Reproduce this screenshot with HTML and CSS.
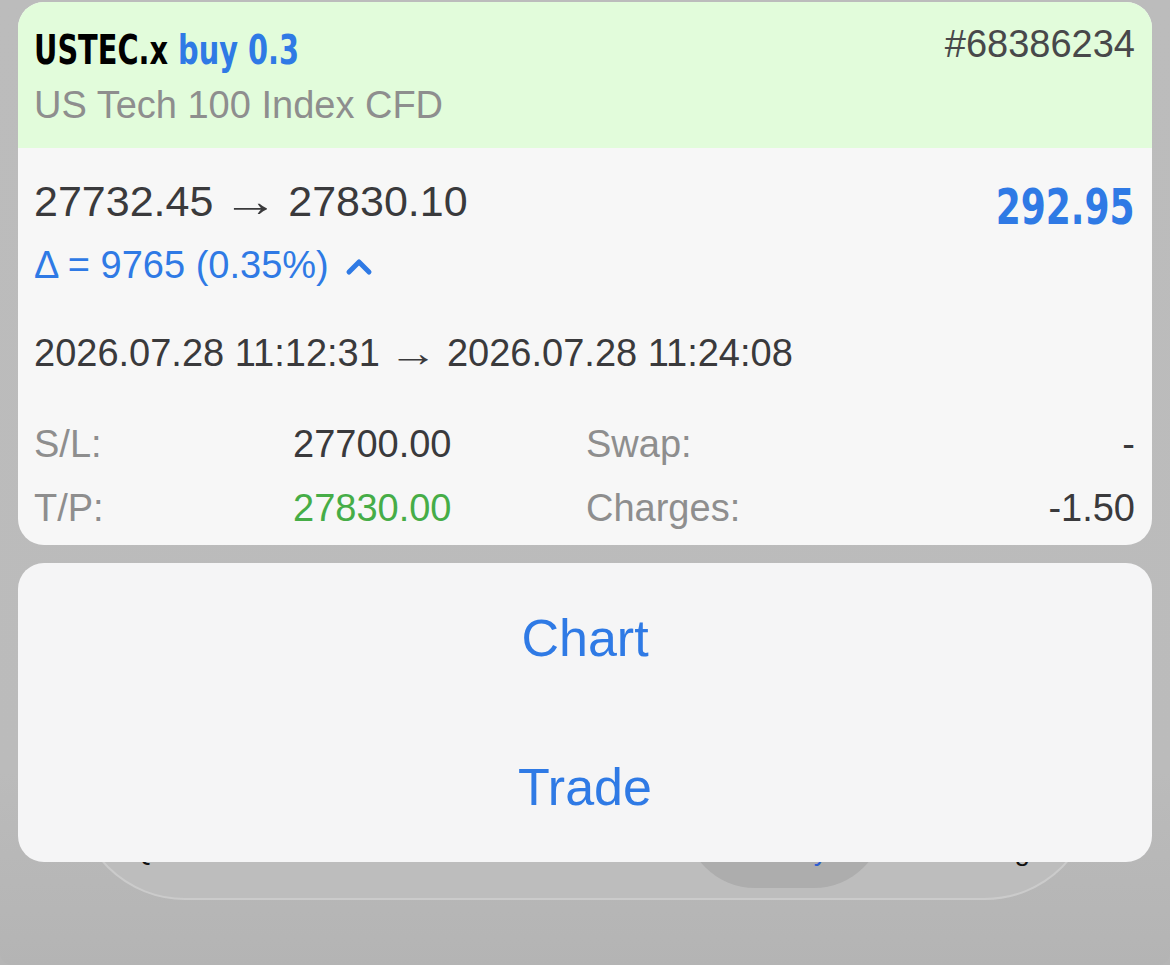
FILE: index.html
```html
<!DOCTYPE html>
<html lang="en">
  <head>
    <meta charset="UTF-8">
    <meta name="viewport" content="width=device-width, initial-scale=1.0">
    <title>USTEC.x position</title>
    <link rel="stylesheet" href="styles.css">
  </head>
  <body>
    <div class="screen">
      <!-- tab bar sitting under the action sheet -->
      <nav class="tabbar" aria-hidden="true">
        <span class="tab">Quotes</span>
        <span class="tab">Chart</span>
        <span class="tab">Trade</span>
        <span class="tab active">History</span>
        <span class="tab">Settings</span>
      </nav>

      <div class="deal">
        <div class="deal-head">
          <div class="head-row">
            <div class="symbol">USTEC.x <span class="side">buy 0.3</span></div>
            <div class="ticket">#68386234</div>
          </div>
          <div class="desc">US Tech 100 Index CFD</div>
        </div>

        <div class="deal-body">
          <div class="price-row">
            <div class="prices">27732.45 <span class="arrow">→</span> 27830.10</div>
            <div class="profit">292.95</div>
          </div>
          <div class="delta">
            Δ = 9765 (0.35%)
            <svg class="chev" width="28" height="18" viewBox="0 0 28 18">
              <path d="M4 14 L14 4 L24 14" fill="none" stroke="#2f7ae5" stroke-width="5" stroke-linecap="round" stroke-linejoin="round"/>
            </svg>
          </div>
          <div class="times">2026.07.28 11:12:31 <span class="arrow">→</span> 2026.07.28 11:24:08</div>

          <div class="stats">
            <span class="lbl">S/L:</span>
            <span class="val">27700.00</span>
            <span class="lbl">Swap:</span>
            <span class="val right">-</span>
            <span class="lbl">T/P:</span>
            <span class="val green">27830.00</span>
            <span class="lbl">Charges:</span>
            <span class="val right">-1.50</span>
          </div>
        </div>
      </div>

      <div class="sheet">
        <button class="sheet-btn">Chart</button>
        <button class="sheet-btn">Trade</button>
      </div>
    </div>
  </body>
</html>
```
FILE: styles.css
```css
body {
  margin: 0;
  padding: 0;
  font-family: 'Liberation Sans', Arial, sans-serif;
  background: #b6b6b6;
}

.screen {
  position: relative;
  height: 965px;
  box-sizing: border-box;
  padding: 2px 18px 0;
  display: flex;
  flex-direction: column;
  gap: 18px;
  overflow: hidden;
  background: linear-gradient(to bottom, #bcbcbc 0%, #bbbbbb 80%, #b4b4b4 100%);
  border-radius: 0 0 12px 12px;
}

/* tab bar behind sheet */
.tabbar {
  position: absolute;
  left: 75px;
  width: 1020px;
  top: 690px;
  height: 210px;
  box-sizing: border-box;
  border-radius: 0 0 110px 110px;
  background: #bdbdbd;
  border: 2px solid #cbcbcb;
  display: flex;
}

.tab {
  flex: 1;
  display: flex;
  align-items: flex-end;
  justify-content: center;
  padding-bottom: 30px;
  font-size: 28px;
  line-height: 34px;
  color: #111;
}

.tab.active {
  color: #2f5fd0;
  background: #adadad;
  margin: 0 10px 10px;
  padding-bottom: 20px;
  border-radius: 0 0 70px 70px;
}

/* position card */
.deal {
  position: relative;
  z-index: 1;
  background: #f7f7f7;
  border-radius: 26px;
  overflow: hidden;
}

.deal-head {
  background: #e2fcdb;
  padding: 24px 17px 19px 16px;
}

.head-row {
  display: flex;
  justify-content: space-between;
  align-items: flex-start;
}

.symbol {
  display: inline-block;
  font-family: 'DejaVu Sans Condensed', 'DejaVu Sans', sans-serif;
  font-weight: bold;
  font-size: 40px;
  line-height: 48px;
  color: #000;
  white-space: nowrap;
  transform: scaleX(0.8);
  transform-origin: left center;
}

.side {
  color: #2f7ae5;
}

.ticket {
  font-size: 38px;
  line-height: 36px;
  color: #48484a;
}

.desc {
  margin-top: 7px;
  font-size: 38px;
  line-height: 48px;
  color: #8e8e8e;
}

.deal-body {
  padding: 27px 17px 5px 16px;
}

.price-row {
  display: flex;
  justify-content: space-between;
  align-items: flex-start;
}

.prices {
  font-size: 43px;
  line-height: 52px;
  color: #3a3a3c;
}

.arrow {
  display: inline-block;
  transform: scaleX(1.3);
  margin: 0 4px;
}

.profit {
  margin-top: 6px;
  font-family: 'DejaVu Sans Condensed', 'DejaVu Sans', sans-serif;
  font-weight: bold;
  font-size: 50px;
  line-height: 52px;
  color: #2f7ae5;
  transform: scaleX(0.8);
  transform-origin: right center;
}

.delta {
  margin-top: 8px;
  font-size: 38px;
  line-height: 48px;
  color: #2f7ae5;
  display: flex;
  align-items: center;
  gap: 16px;
}

.chev {
  margin-top: 4px;
}

.times {
  margin-top: 40px;
  font-size: 38px;
  line-height: 48px;
  color: #3a3a3c;
}

.stats {
  margin-top: 35px;
  display: grid;
  grid-template-columns: 259px 293px 1fr auto;
  font-size: 38px;
  line-height: 64px;
}

.lbl {
  color: #8e8e8e;
}

.val {
  color: #3a3a3c;
}

.val.green {
  color: #46ad47;
}

.val.right {
  text-align: right;
}

/* action sheet */
.sheet {
  position: relative;
  z-index: 1;
  height: 299px;
  background: #f5f5f6;
  border-radius: 26px;
  display: flex;
  flex-direction: column;
}

.sheet-btn {
  flex: 1;
  border: none;
  background: none;
  font-family: 'Liberation Sans', Arial, sans-serif;
  font-size: 52px;
  color: #2f7ae5;
  cursor: pointer;
  padding: 0;
}
```
